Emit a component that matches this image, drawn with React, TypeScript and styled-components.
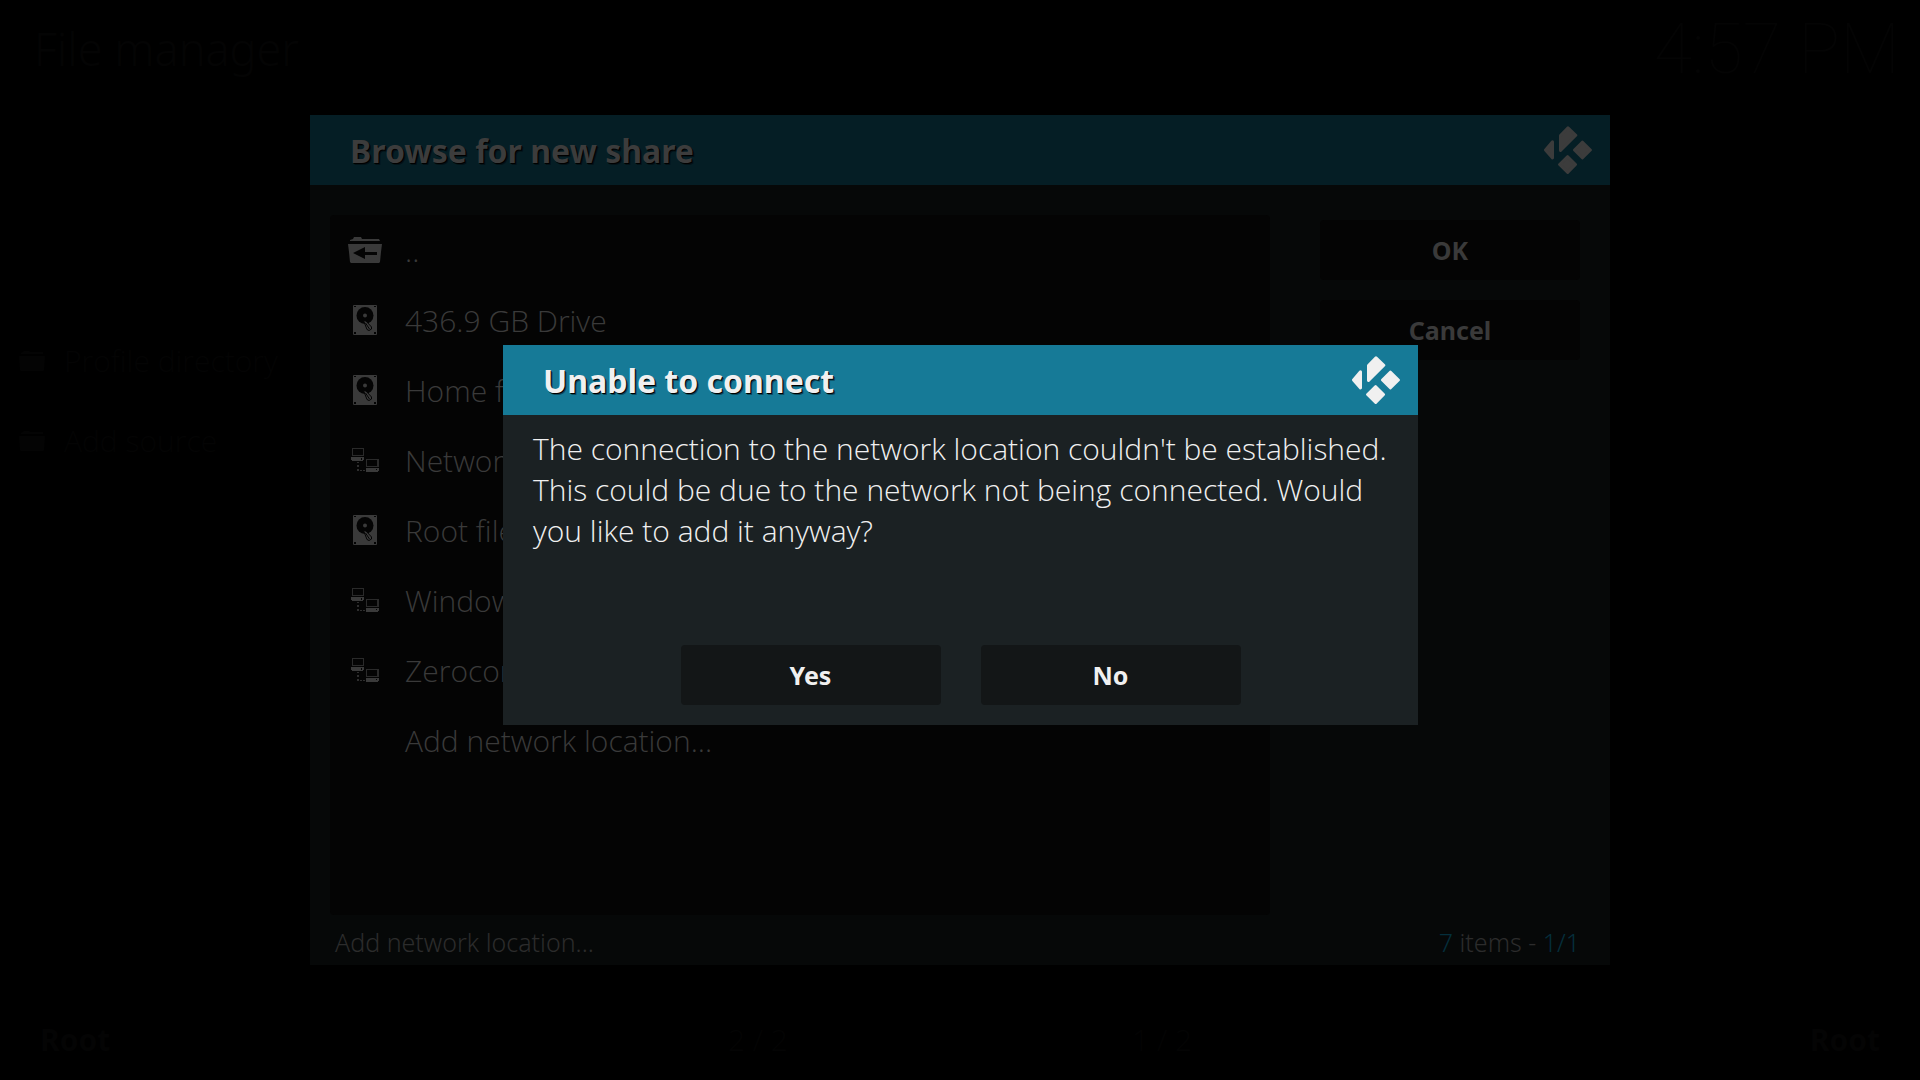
import React from 'react';
import styled, { createGlobalStyle } from 'styled-components';

const Global = createGlobalStyle`
  * { box-sizing: border-box; }
  body {
    margin: 0;
    background: #000;
    font-family: "Open Sans", "Noto Sans", sans-serif;
    font-size: 30px;
    line-height: 40px;
    font-weight: 300;
  }
  h1, h2, p, ul { margin: 0; padding: 0; font-weight: inherit; }
  ul { list-style: none; }
  button { font: inherit; color: inherit; border: 0; padding: 0; background: none; cursor: pointer; }
`;

const Screen = styled.div`
  min-height: 100vh;
  display: flex;
  flex-direction: column;
  background: #000;
  color: #040404;
`;

const TopBar = styled.header`
  display: flex;
  justify-content: space-between;
  align-items: center;
  height: 98px;
  padding: 0 20px 0 34px;
`;

const PageTitle = styled.h1`
  font-family: "Noto Sans", sans-serif;
  font-size: 45px;
  line-height: 60px;
`;

const Clock = styled.time`
  font-family: Roboto, sans-serif;
  font-size: 70px;
  line-height: 80px;
  font-weight: 100;
`;

const FileColumns = styled.main`
  flex: 1;
  padding: 223px 0 0 12px;
`;

const SourceRow = styled.button`
  display: flex;
  align-items: center;
  gap: 12px;
  width: 300px;
  height: 80px;
  text-align: left;
`;

const BottomBar = styled.footer`
  display: grid;
  grid-template-columns: 1fr 1fr;
  column-gap: 344px;
  height: 80px;
  align-items: center;
  padding: 0 40px;
`;

const PaneStatus = styled.div`
  display: flex;
  justify-content: space-between;
`;

const PathName = styled.strong`
  font-family: "Noto Sans", sans-serif;
  font-weight: 700;
`;

const Overlay = styled.div`
  position: fixed;
  inset: 0;
  display: grid;
  place-items: center;
`;

const BrowseDialog = styled.section`
  width: 1300px;
  max-width: 100%;
  background: #060808;
  color: #3a3a3a;
`;

const DialogHeader = styled.header<{ $active?: boolean }>`
  display: flex;
  align-items: center;
  justify-content: space-between;
  height: 70px;
  padding: 0 18px 0 40px;
  background: ${p => (p.$active ? '#167a97' : '#051e25')};
  color: ${p => (p.$active ? '#f0f0f0' : '#3c3c3c')};
`;

const DialogTitle = styled.h2`
  padding-top: 2px;
  font-family: "Noto Sans", sans-serif;
  font-size: 32px;
  line-height: 44px;
  font-weight: 700;
  text-shadow: 1px 1px 0 #000, 2px 2px 0 #0006;
`;

const BrowseBody = styled.div`
  display: grid;
  grid-template-columns: 1fr 260px;
  column-gap: 50px;
  padding: 30px 30px 0 20px;
`;

const ShareList = styled.ul`
  height: 700px;
  border-radius: 4px;
  background: #040404;
`;

const ShareRow = styled.button`
  display: grid;
  grid-template-columns: 40px 1fr;
  column-gap: 20px;
  align-items: center;
  width: 100%;
  height: 70px;
  padding-left: 15px;
  text-align: left;
`;

const ShareName = styled.span`
  padding-top: 2px;
`;

const IconCell = styled.span`
  display: flex;
  justify-content: center;
`;

const Actions = styled.div`
  display: flex;
  flex-direction: column;
  gap: 20px;
  padding-top: 5px;
`;

const ActionButton = styled.button<{ $active?: boolean }>`
  width: 260px;
  height: 60px;
  border-radius: 4px;
  background: ${p => (p.$active ? '#131617' : '#040404')};
  font-family: "Noto Sans", sans-serif;
  font-size: 25px;
  line-height: 34px;
  font-weight: 700;
`;

const BrowseFooter = styled.footer`
  display: flex;
  justify-content: space-between;
  align-items: center;
  height: 50px;
  padding: 4px 30px 0 25px;
  font-family: "Noto Sans", sans-serif;
  font-size: 25px;
  line-height: 34px;
  color: #2c2c2c;
`;

const Accent = styled.span`
  color: #052f3c;
`;

const MessageLayer = styled(Overlay)`
  padding: 0 0 10px 1px;
`;

const MessageDialog = styled.section`
  width: 915px;
  max-width: 100%;
  background: #1b2123;
  color: #f0f0f0;
`;

const Message = styled.p`
  height: 230px;
  padding: 13px 30px 0;
  line-height: 41px;
`;

const MessageActions = styled.div`
  display: flex;
  justify-content: center;
  gap: 40px;
  height: 80px;
`;

const KodiLogo = () => (
  <svg width="48" height="48" viewBox="0 0 48 48" fill="currentColor" stroke="currentColor" strokeWidth="3" strokeLinejoin="round" aria-hidden="true">
    <path d="M16.500 9.500 24 1.800 31.800 9.300 16.500 24.500z" />
    <path d="M8.500 15.700 1.500 24 8.500 31.900z" />
    <path d="M38.300 16.200 46.400 24 38.300 31.800 30.500 24z" />
    <path d="M23.700 30.700 31.500 38.500 23.700 46.400 15.600 38.500z" />
  </svg>
);

const FolderBack = () => (
  <svg width="34" height="26" viewBox="0 0 34 26" fill="currentColor" aria-hidden="true">
    <path d="M2 4V3l3-1 1-2h7l1 2h17l1 2z" />
    <path fillRule="evenodd" d="M0 7h34l-1 8-1 10-1 1H3l-1-1L1 15zM5 16l12 6v-4h12v-3H17v-5z" />
  </svg>
);

const Folder = () => (
  <svg width="40" height="20" viewBox="0 0 40 20" fill="currentColor" aria-hidden="true">
    <path d="M9 3V2l2-1 1-1h5l1 1h13v2zM7 5h26l-1 14-1 1H9l-1-1z" />
  </svg>
);

const Drive = () => (
  <svg width="24" height="30" viewBox="0 0 24 30" aria-hidden="true">
    <rect width="24" height="30" rx="1" fill="currentColor" />
    <circle cx="12" cy="10.500" r="8.500" fill="#040404" />
    <circle cx="12" cy="10.500" r="2" fill="currentColor" />
    <path d="M10.500 15.500 13 16l5.500 6v2L16 25.500l-2-1z" fill="currentColor" stroke="#040404" />
    <path d="m12.500 18 4 6" stroke="#040404" />
    <path d="M1 1h2v1H1zM21 1h2v1h-2zM1 27h2v2H1zM21 27h2v2h-2z" fill="#040404" />
  </svg>
);

const Network = () => (
  <svg width="28" height="24" viewBox="0 0 28 24" fill="currentColor" aria-hidden="true">
    <path opacity=".7" fillRule="evenodd" d="M1 0h12v8H1zM2 1v6h10V1zM15 11h13v8H15zM16 12v6h10v-6z" />
    <path d="M0 9h13v3H12v1H1v-1H0zM15 20h13v3H27v1H15z" />
    <path opacity=".8" d="M6 14h2v1H6zM6 17h2v2H6zM6 21h2v2H6zM9 22h2v1H9zM12 22h2v1h-2z" />
    <path d="M10 10h1v2h-1zM25 21h1v1h-1z" fill="#040404" />
  </svg>
);

const icons = { back: FolderBack, drive: Drive, network: Network };

const shares: { label: string; icon?: keyof typeof icons }[] = [
  { label: '..', icon: 'back' },
  { label: '436.9 GB Drive', icon: 'drive' },
  { label: 'Home folder', icon: 'drive' },
  { label: 'Network', icon: 'network' },
  { label: 'Root filesystem', icon: 'drive' },
  { label: 'Windows network', icon: 'network' },
  { label: 'Zeroconf browser', icon: 'network' },
  { label: 'Add network location...' },
];

export default function App() {
  return (
    <>
      <Global />
      <Screen>
        <TopBar>
          <PageTitle>File manager</PageTitle>
          <Clock>4:57 PM</Clock>
        </TopBar>
        <FileColumns>
          <SourceRow><Folder />Profile directory</SourceRow>
          <SourceRow><Folder />Add source</SourceRow>
        </FileColumns>
        <BottomBar>
          <PaneStatus><PathName>Root</PathName><span>2 / 2</span></PaneStatus>
          <PaneStatus><span>1 / 2</span><PathName>Root</PathName></PaneStatus>
        </BottomBar>
      </Screen>

      <Overlay>
        <BrowseDialog role="dialog" aria-labelledby="browse-title">
          <DialogHeader>
            <DialogTitle id="browse-title">Browse for new share</DialogTitle>
            <KodiLogo />
          </DialogHeader>
          <BrowseBody>
            <ShareList>
              {shares.map(({ label, icon }) => {
                const Icon = icon && icons[icon];
                return (
                  <li key={label}>
                    <ShareRow>
                      <IconCell>{Icon && <Icon />}</IconCell>
                      <ShareName>{label}</ShareName>
                    </ShareRow>
                  </li>
                );
              })}
            </ShareList>
            <Actions>
              <ActionButton>OK</ActionButton>
              <ActionButton>Cancel</ActionButton>
            </Actions>
          </BrowseBody>
          <BrowseFooter>
            <span>Add network location...</span>
            <span><Accent>7</Accent> items - <Accent>1/1</Accent></span>
          </BrowseFooter>
        </BrowseDialog>
      </Overlay>

      <MessageLayer>
        <MessageDialog role="alertdialog" aria-modal="true" aria-labelledby="message-title" aria-describedby="message-text">
          <DialogHeader $active>
            <DialogTitle id="message-title">Unable to connect</DialogTitle>
            <KodiLogo />
          </DialogHeader>
          <Message id="message-text">
            The connection to the network location couldn't be established. This could be due to the network not being connected. Would you like to add it anyway?
          </Message>
          <MessageActions>
            <ActionButton $active>Yes</ActionButton>
            <ActionButton $active>No</ActionButton>
          </MessageActions>
        </MessageDialog>
      </MessageLayer>
    </>
  );
}
